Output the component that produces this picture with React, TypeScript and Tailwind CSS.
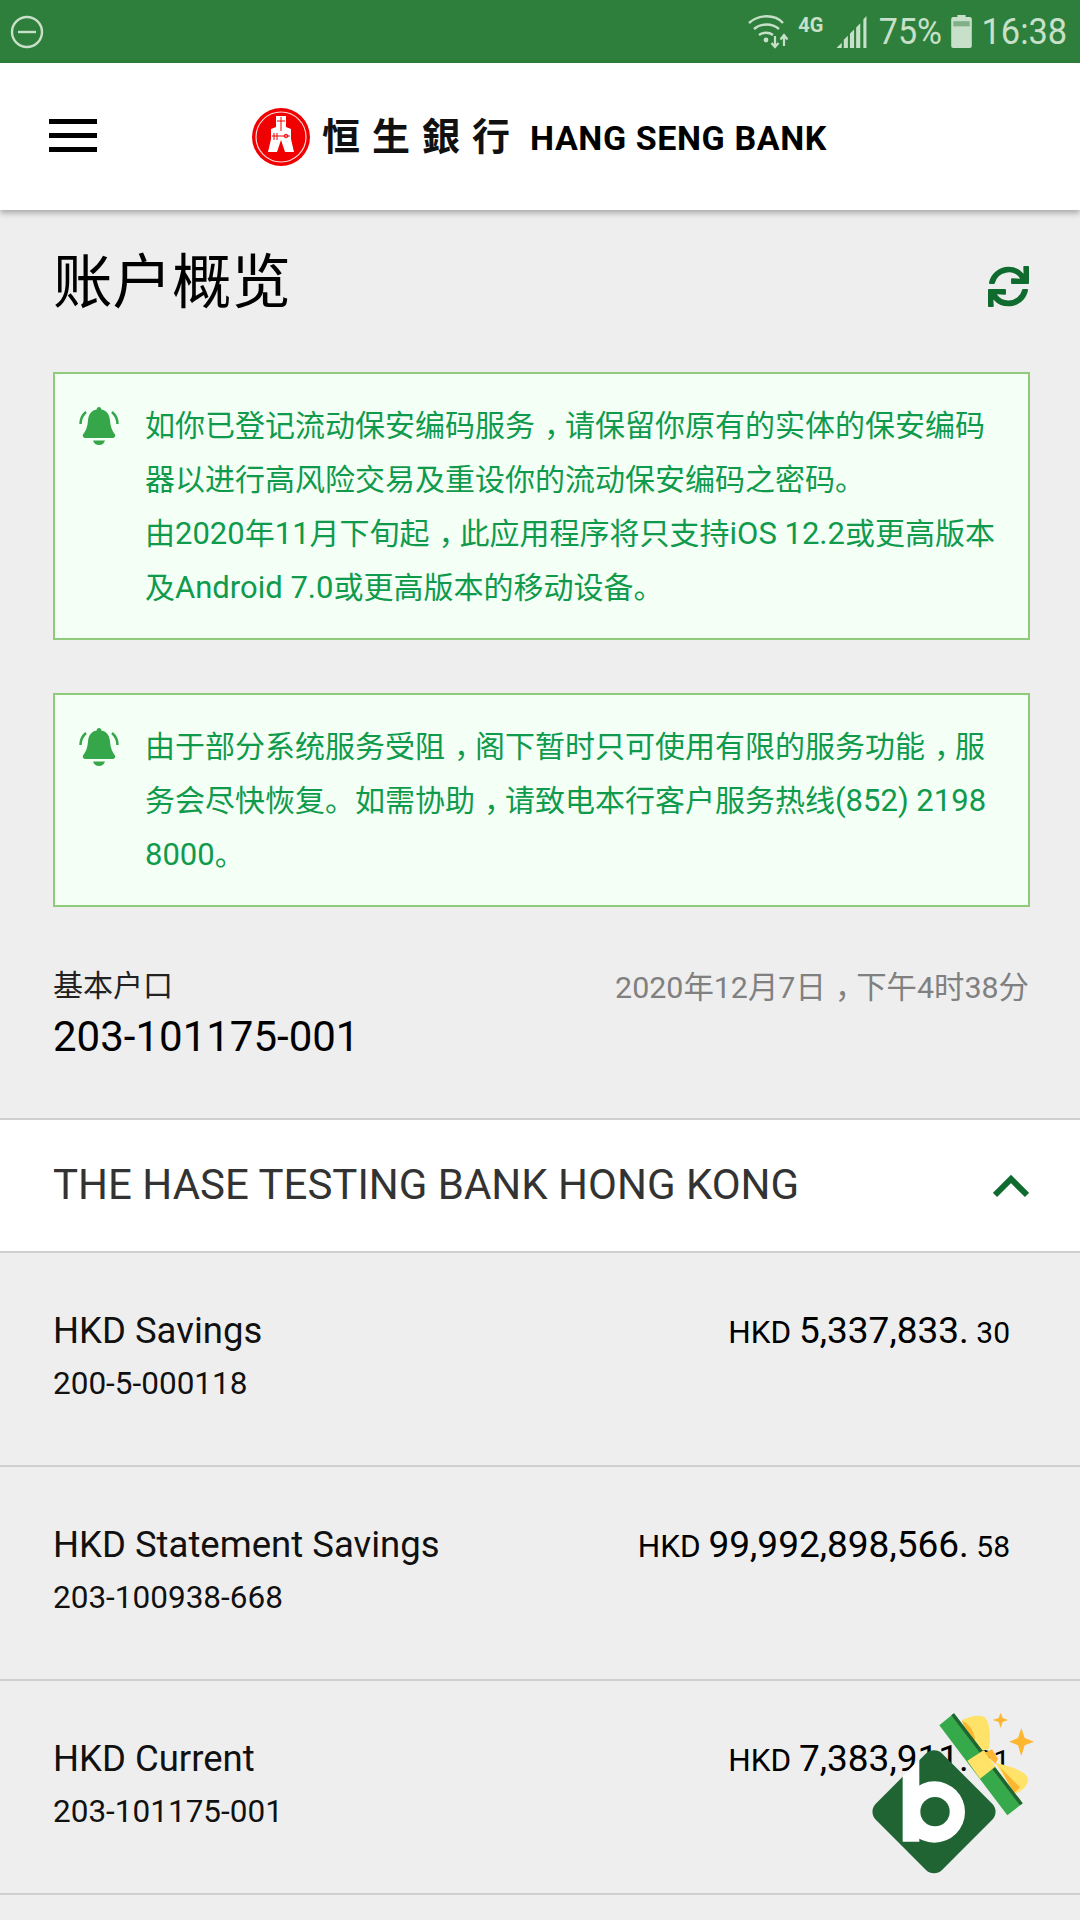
import { FaSync } from 'react-icons/fa'

const sans = 'font-["Roboto","Noto_Sans_CJK_SC",sans-serif]'

const Bell = () => (
  <svg viewBox="0 0 40 40" className="w-10 h-10 shrink-0 mt-[8px] text-[#36a64a]" fill="currentColor">
    <path d="M20 0c1.400 0 2.300 1 2.300 2.400 5.700 1 8.300 5.400 8.700 11 .4 6.200 2.200 10.400 5 14.200.8 2-.3 3-2 3.400H6c-1.700-.4-2.800-1.400-2-3.400 2.800-3.800 4.600-8 5-14.200.4-5.600 3-10 8.700-11C17.700 1 18.600 0 20 0z" />
    <path d="M14 33.500h12c-1 3-3 4.500-6 4.500s-5-1.500-6-4.500z" />
    <path d="M7 5C3.500 8 1.500 12 1.500 17M33 5c3.500 3 5.500 7 5.500 12" fill="none" stroke="currentColor" strokeWidth="2.500" />
  </svg>
)

// centred half-width comma, as the app's font draws it
const Comma = () => <span className='[font-feature-settings:"halt"] pl-[0.3em] pr-[0.2em]'>，</span>

// latin runs sit a touch larger than the CJK
const Line = ({ text }: { text: string }) => (
  <p>
    {text.split(/([A-Za-z0-9.() ]+|，)/).map((part, i) => {
      if (part === '，') return <Comma key={i} />
      if (/^[A-Za-z0-9.() ]+$/.test(part)) return <span key={i} className="text-[31px]">{part}</span>
      return part
    })}
  </p>
)

const Notice = ({ lines }: { lines: string[] }) => (
  <div className="ml-[53px] mr-[50px] border-2 border-[#8fcb7b] bg-[#f4fff6] pt-[25px] pb-[23px] pl-6 flex gap-[26px]">
    <Bell />
    <div className="text-[30px] leading-[54px] text-[#0f9a4c] whitespace-nowrap">
      {lines.map(l => <Line key={l} text={l} />)}
    </div>
  </div>
)

const Row = ({ name, no, cur, main, cents }: { name: string; no: string; cur: string; main: string; cents: string }) => (
  <div className="h-[214px] border-b-2 border-[#cfcfcf] pl-[53px] pr-[53px] pt-[54px] flex justify-between text-black">
    <div>
      <p className="text-[36.500px] leading-[48px] text-[#111]">{name}</p>
      <p className="text-[31.500px] leading-[40px] mt-[9px] text-[#111]">{no}</p>
    </div>
    <p className="mr-[17px] leading-[48px] whitespace-nowrap">
      <span className="text-[31.500px]">{cur} </span>
      <span className="text-[37px]">{main}</span>
      <span className="text-[30px]"> {cents}</span>
    </p>
  </div>
)

export default function App() {
  return (
    <div className={`${sans} relative w-[1080px] h-[1920px] overflow-hidden bg-[#eeeeee]`}>
      {/* status bar */}
      <div className="h-[63px] bg-[#2e7f3b] flex items-center justify-between pl-[10px] pr-[13px] text-[#c8e0c9]">
        <svg viewBox="0 0 34 34" className="w-[34px] h-[34px]" fill="none" stroke="currentColor" strokeWidth="2.400">
          <circle cx="17" cy="17" r="15" />
          <path d="M8 17h18" />
        </svg>
        <div className="flex items-center">
          <svg viewBox="0 0 44 36" className="w-[44px] h-[36px]" fill="none" stroke="currentColor" strokeWidth="2.400">
            <path d="M2 9c10-9 26-9 34 0M7 15c7-6 18-6 25 0M12 21c4-3 10-3 14 0" />
            <circle cx="19" cy="26" r="2.400" fill="currentColor" stroke="none" />
            <path d="M28 22v11M24.500 29l3.500 4 3.500-4M37 32V22M33.500 25.500L37 21l3.500 4.500" strokeWidth="2.200" />
          </svg>
          <span className="ml-[7px] w-[24px] text-[20px] font-bold -mt-[14px] leading-none">4G</span>
          <svg viewBox="0 0 29 32" className="ml-[14px] w-[31px] h-[33px]" fill="currentColor">
            <path d="M0 32l5-5v5zM7 24l4-4v12H7zM13 18l4-4v18h-4zM19 12l4-4v24h-4zM26 4l3-3v31h-3z" />
          </svg>
          <span className="ml-[9px] text-[37px] leading-none scale-x-[0.92] origin-center">75%</span>
          <svg viewBox="0 0 20 32" className="ml-[6px] w-[21px] h-[33px]">
            <path d="M6 0h8v2h4a2 2 0 012 2v26a2 2 0 01-2 2H2a2 2 0 01-2-2V4a2 2 0 012-2h4z" fill="currentColor" />
            <path d="M2 6h16v5H2z" fill="#7fb088" />
          </svg>
          <span className="ml-[3px] text-[37px] leading-none scale-x-[0.93] origin-right">16:38</span>
        </div>
      </div>
      {/* header */}
      <div className="relative h-[147px] bg-white shadow-[0_3px_6px_rgba(0,0,0,0.3)] flex items-center">
        <div className="ml-[49px] w-[48px] flex flex-col gap-[9px] -mt-[2px]">
          <div className="h-[5px] bg-black" />
          <div className="h-[5px] bg-black" />
          <div className="h-[5px] bg-black" />
        </div>
        <div className="ml-[155px] flex items-center">
          <svg viewBox="0 0 58 58" className="w-[58px] h-[58px]">
            <circle cx="29" cy="29" r="29" fill="#f00000" />
            <circle cx="29" cy="29" r="25" fill="none" stroke="#ffd8d8" strokeWidth="1.200" />
            <path d="M24 8h10v11l5 2v10l3 13h-9l-4-12-4 12h-9l3-13V21l5-2z" fill="#fff" />
            <path d="M29 9v14M25 13h8M20 28h18M22 25v7M25 25v7" stroke="#f00000" strokeWidth="1" fill="none" />
            <circle cx="34" cy="28" r="1.800" fill="none" stroke="#f00000" strokeWidth="1" />
          </svg>
          <span className='ml-[12px] -mt-[5px] w-[204px] text-[38px] leading-none font-bold font-["Noto_Sans_CJK_TC",sans-serif] tracking-[12px] whitespace-nowrap text-[#111]'>恒生銀行</span>
          <span className='ml-[4px] mt-[3px] text-[34px] font-bold text-black tracking-[0.6px] whitespace-nowrap font-["Roboto",sans-serif]'>HANG SENG BANK</span>
        </div>
      </div>
      {/* title */}
      <div className="h-[162px] pl-[53px] pr-[51px] flex justify-between items-start pt-[38px]">
        <h1 className="text-[59.500px] leading-[70px] text-black">账户概览</h1>
        <FaSync className="mt-[18px] text-[#0f6b2e] w-[41px] h-[41px]" />
      </div>
      <Notice lines={['如你已登记流动保安编码服务，请保留你原有的实体的保安编码', '器以进行高风险交易及重设你的流动保安编码之密码。', '由2020年11月下旬起，此应用程序将只支持iOS 12.2或更高版本', '及Android 7.0或更高版本的移动设备。']} />
      <div className="mt-[53px]">
        <Notice lines={['由于部分系统服务受阻，阁下暂时只可使用有限的服务功能，服', '务会尽快恢复。如需协助，请致电本行客户服务热线(852) 2198', '8000。']} />
      </div>
      {/* account info */}
      <div className="pl-[53px] pr-[51px] mt-[59px] h-[152px] flex justify-between">
        <div>
          <p className="text-[30px] leading-[40px] text-[#222]">基本户口</p>
          <p className="text-[42px] leading-[50px] mt-[6px] text-black">203-101175-001</p>
        </div>
        <p className="text-[30.400px] leading-[44px] text-[#808080]">
          2020年12月7日<Comma />下午4时38分
        </p>
      </div>
      {/* section */}
      <div className="h-[135px] bg-white border-y-2 border-[#cfcfcf] pl-[53px] pr-[51px] flex items-center justify-between">
        <span className="text-[42px] text-[#333] -mt-[2px]">THE HASE TESTING BANK HONG KONG</span>
        <svg viewBox="0 0 36 24" className="w-[36px] h-[24px]" fill="none" stroke="#0f6b2e" strokeWidth="6">
          <path d="M2 21L18 5l16 16" />
        </svg>
      </div>
      <Row name="HKD Savings" no="200-5-000118" cur="HKD" main="5,337,833." cents="30" />
      <Row name="HKD Statement Savings" no="203-100938-668" cur="HKD" main="99,992,898,566." cents="58" />
      <Row name="HKD Current" no="203-101175-001" cur="HKD" main="7,383,911." cents="31" />
      {/* floating badge */}
      <svg viewBox="0 0 720 720" className="absolute left-[840px] top-[1680px] w-[240px] h-[240px]">
        <rect x="141.500" y="254.500" width="281" height="281" rx="34" transform="rotate(45 282 395)" fill="#1f6432" />
        <path d="M188 288l50-50v247h-50z" fill="#fff" />
        <circle cx="283" cy="396" r="92" fill="#fff" />
        <circle cx="285" cy="395" r="44" fill="#1f6432" />
        <path d="M366 120c30-14 62-18 72-4 14 20 14 64 8 92l-22 2z" fill="#ffe268" />
        <path d="M366 122c24 10 40 36 40 68l-24-22z" fill="#fdb62f" />
        <path d="M466 248c34 8 88 22 98 46 2 24-20 40-40 48z" fill="#ffe268" />
        <path d="M480 262l60 60-18 18z" fill="#fdb62f" />
        <path d="M298 136l44-36 206 270-46 36z" fill="#36a94a" />
        <path d="M342 100l206 270-8 6-206-270z" fill="#1f6432" />
        <path d="M382 242l50-32 34 50-46 36z" fill="#ffe268" />
        <path d="M434 218l22-10 18 28-8 16z" fill="#fdb62f" />
        <path d="M482 98l6 16 16 6-16 6-6 18-6-18-18-6 18-6zM544 144l10 30 28 11-28 11-10 32-10-32-26-11 26-11z" fill="#fdb62f" />
      </svg>
    </div>
  )
}
